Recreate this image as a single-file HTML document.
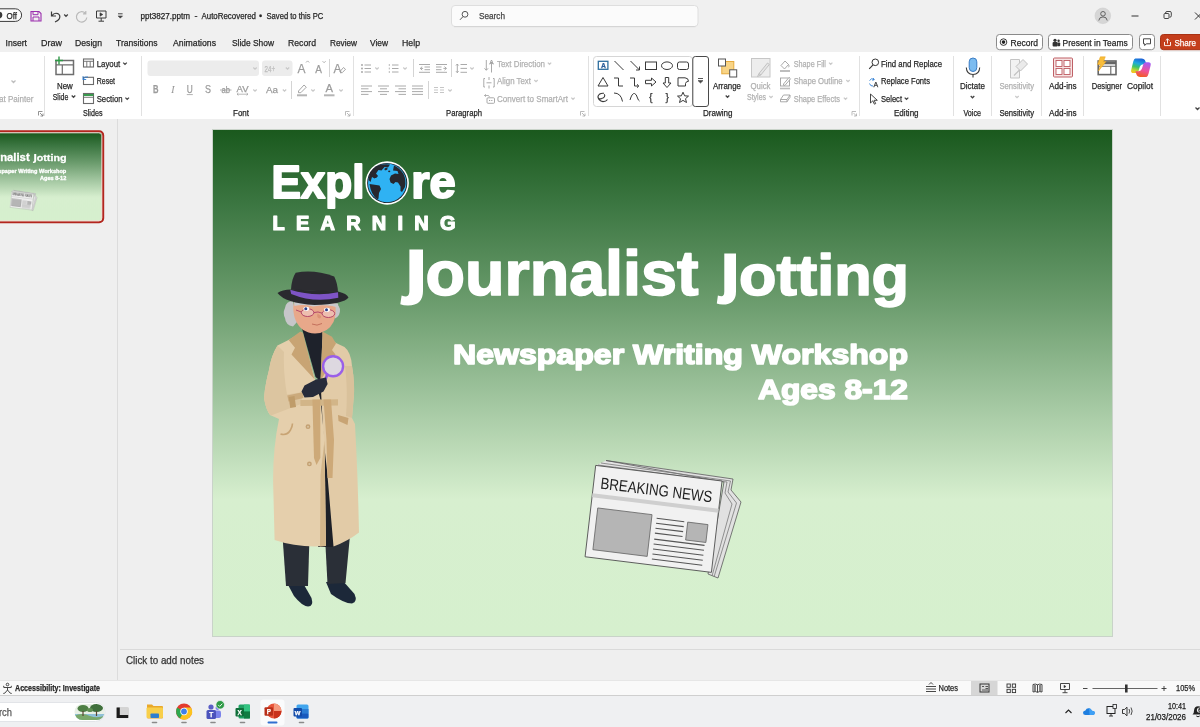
<!DOCTYPE html>
<html><head><meta charset="utf-8">
<style>
html,body{margin:0;padding:0}
body{width:1200px;height:727px;position:relative;overflow:hidden;background:#f0f0f0;font-family:"Liberation Sans",sans-serif;color:#262626}
.a{position:absolute}
svg{position:absolute;overflow:hidden}
</style></head><body>
<div class="a" style="left:0;top:0;width:1200px;height:52px;background:#f0f0f0"></div>
<div class="a" style="left:0;top:52px;width:1200px;height:67px;background:#fff"></div>
<div class="a" style="left:0;top:119px;width:1200px;height:561px;background:#efefef"></div>
<div class="a" style="left:0;top:680px;width:1200px;height:16px;background:#f9f9f9"></div>
<div class="a" style="left:0;top:696px;width:1200px;height:31px;background:#eff0f2"></div>
<!-- ===== SLIDE + ART (page coordinates) ===== -->
<svg id="art" class="a" style="left:0;top:0;will-change:transform" width="1200" height="727" viewBox="0 0 1200 727">
<defs>
<linearGradient id="bg" x1="0" y1="0" x2="0" y2="1">
<stop offset="0" stop-color="#1a591d"/>
<stop offset="0.14" stop-color="#3a7540"/>
<stop offset="0.34" stop-color="#6b9c6d"/>
<stop offset="0.54" stop-color="#a3c7a1"/>
<stop offset="0.73" stop-color="#d7efcf"/>
<stop offset="1" stop-color="#d6f0ce"/>
</linearGradient>
</defs>
<g id="slideart">
<rect x="213" y="130" width="899" height="506" fill="url(#bg)"/>
<!-- logo -->
<g fill="#fff" stroke="#fff" stroke-linejoin="round" font-family="Liberation Sans" font-weight="bold">
<text x="271.5" y="197.5" font-size="46" stroke-width="2" textLength="93" lengthAdjust="spacingAndGlyphs">Expl</text>
<text x="411.3" y="197.5" font-size="46" stroke-width="2" textLength="44.5" lengthAdjust="spacingAndGlyphs">re</text>
<text x="272.5" y="230" font-size="20" stroke-width="1.2" textLength="183" lengthAdjust="spacing">LEARNING</text>
</g>
<g id="globe">
<circle cx="387.2" cy="183" r="21.7" fill="#fff"/>
<circle cx="387.2" cy="183" r="20.1" fill="#1b2630"/>
<circle cx="387.2" cy="183" r="19.2" fill="#2fb2f3"/>
<path d="M368.6 180Q369 170 377 166Q383 163.5 390 164.5L388 167.5L384.5 167L381.5 170.5L378.5 170L376 173.5L378 176L374.5 178.5L372 177L370.5 182Z" fill="#27272f"/>
<ellipse cx="375.8" cy="176.6" rx="1.8" ry="1.2" fill="#27272f" transform="rotate(-30 375.8 176.6)"/>
<ellipse cx="386" cy="169" rx="1.7" ry="1.1" fill="#27272f" transform="rotate(-30 386 169)"/>
<ellipse cx="389.2" cy="171.3" rx="1.1" ry="0.9" fill="#27272f"/>
<path d="M369.5 184L373 184.5L379.5 185.5L381 189L379 193L378.5 198.5L377.5 199.5Q371 195 369.5 184Z" fill="#27272f"/>
<path d="M394 165.5Q400 168 403.5 174Q406.5 180 405 187L402 192L400.5 191L400.5 186.5L398 182.5L395.5 182L393.5 184L390.5 182.5L389.5 179L391 175.5L395 173.5L398.5 174L397.5 171L393 170.5Z" fill="#27272f"/>
</g>
<!-- title -->
<g fill="#fff" stroke="#fff" stroke-width="1.6" stroke-linejoin="round" font-family="Liberation Sans" font-weight="bold">
<text x="425.5" y="294.5" font-size="63" textLength="273" lengthAdjust="spacingAndGlyphs">ournalist</text>
<text x="739" y="294.5" font-size="57" textLength="170" lengthAdjust="spacingAndGlyphs">otting</text>
<text x="453" y="364" font-size="28" textLength="455" lengthAdjust="spacingAndGlyphs">Newspaper Writing Workshop</text>
<text x="758" y="399" font-size="28" textLength="150" lengthAdjust="spacingAndGlyphs">Ages 8-12</text>
</g>
<path d="M409.4 249.6H423V291Q423 305.5 408 305.5Q403.5 305.5 400.3 304.2L401.6 295.4Q404 296.4 406 296.4Q409.4 296.4 409.4 291Z" fill="#fff"/>
<path d="M724.3 253.5H736V291.5Q736 304.6 722.8 304.6Q719.3 304.6 716.8 303.5L717.9 295.4Q719.8 296.2 721.4 296.2Q724.3 296.2 724.3 291.5Z" fill="#fff"/>
<g id="lady">
<!-- shoes -->
<path d="M287 583L303 583L311.5 598Q314 606.5 308 606.5Q302 606 294 596Z" fill="#1c2839"/>
<path d="M326 582L343 581L354.5 594Q358 602 352 603.5Q344 603.5 331 594Z" fill="#1c2839"/>
<!-- trousers -->
<path d="M282.5 536L309.5 536L308 586L286 586Z" fill="#2a2f37"/>
<path d="M325 536L350.5 530L345.5 583L327.5 584Z" fill="#2a2f37"/>
<!-- dark inside of coat -->
<path d="M316 380L324 380L334 547L318 547Z" fill="#1d2027"/>
<!-- coat right panel -->
<path d="M322 332L336 343L344.5 347Q351 352 352 366Q354.5 380 354 394L352 418L355 424Q358 480 359 532.5Q348 541 333.5 546.5L327 470L323.5 440L320.5 380Z" fill="#e2cba7"/>
<!-- coat left panel -->
<path d="M302 332L288.5 340L277.5 345.5Q271 356 269 370Q265 385 264 398Q266 410 270 415L279 419Q272.5 450 273.2 485L274.6 540Q298 548 326 546L324.5 440L320.5 400L314.5 378Z" fill="#e5cfac"/>
<!-- inner facing -->
<path d="M320.5 475L324.5 440L326 546L320 546.4Z" fill="#d3b68a"/>
<!-- left arm (slightly darker) -->
<path d="M277.5 345.5Q271 356 269 370Q265 385 264 398Q266 411 271 415.5L301 404L303 392L287 394.5Q283 372 284 352Z" fill="#dcc5a0"/>
<path d="M352 366Q354.5 380 354 394L352 418L346 416Q348 390 345 366Z" fill="#d9c19b"/>
<!-- turtleneck -->
<path d="M302 328.5L322.5 328.5L322.5 336L320.5 381L315.5 377Z" fill="#1e222b"/>
<!-- lapels -->
<path d="M300.4 331.5L288.7 340L295 347.7L291.5 354.6L314.3 379L303 333Z" fill="#c8a474"/>
<path d="M322.4 331.5L332 336.7L336 343.6L332 350L335.5 354.6L320.5 381L322.5 336Z" fill="#c8a474"/>
<!-- cuff strap -->
<path d="M287.3 395.5L302.5 392.2L303.5 398L288.5 401.5Z" fill="#cbaa7c"/>
<path d="M288.7 397L294.5 396L296 407L290.2 408Z" fill="#bf9c6a"/>
<!-- belt -->
<path d="M300.4 400L338 399.3L338 405.5L300.4 406Z" fill="#d2b588"/>
<path d="M312.4 399.5L320.3 399.5L320.3 458L316.5 465L314 458Z" fill="#cda978"/>
<path d="M323.5 399.5L331 399.5L334 440L332.5 478L327.5 478L326.5 440Z" fill="#cda978"/>
<!-- pockets / buttons -->
<path d="M280.5 434Q287 436 290.5 430Q292.5 426 292.5 423.5" stroke="#c8a474" stroke-width="1.6" fill="none"/>
<path d="M338 415L348.5 418L347.5 425L338.5 421Z" fill="#c8a474"/>
<circle cx="308" cy="426.7" r="2.4" fill="#c4a173"/><circle cx="308" cy="426.7" r="1" fill="#d9c4a0"/>
<circle cx="309.4" cy="463.9" r="2.4" fill="#c4a173"/><circle cx="309.4" cy="463.9" r="1" fill="#d9c4a0"/>
<!-- magnifier -->
<path d="M327 375L325.3 380" stroke="#8d55e0" stroke-width="2.6" stroke-linecap="round"/>
<circle cx="333.1" cy="366.3" r="10" fill="#ddd8e0" stroke="#9a5fe8" stroke-width="2.4"/>
<!-- glove -->
<path d="M326 377.5L327.6 384L323.5 391.5L313 397L304.5 397.5L301.5 391.5L304.5 385.5L316 379.5Z" fill="#272b3a"/>
<!-- hair -->
<path d="M293 301Q286 301 285 308Q282.5 313 285 318Q285.5 325 293 326.5L297 322L294 306Z" fill="#c6c6c9"/>
<path d="M332 303Q338.5 303.5 340 309Q340.5 316 335 318.5L333 312Z" fill="#c6c6c9"/>
<!-- face -->
<path d="M294 302L335 303Q337 314 333.5 322Q328 333 315 333.5Q301 333 295.5 320Q292 311 294 302Z" fill="#e8a88a"/>
<path d="M294 301L338 303.5L338.5 308Q334 305.5 322 305.2L313 306.5Q303 304 294.5 306Z" fill="#c9c9cc"/>
<path d="M303.5 300.5Q308 299.5 313.5 301.5L313 304Q308 302.5 304 303.5Z" fill="#b4b4b7"/>
<!-- eyes / glasses -->
<ellipse cx="307.6" cy="312.6" rx="6.3" ry="3.9" fill="#f6d9dc" fill-opacity="0.45" stroke="#b5486a" stroke-width="1"/><ellipse cx="328.4" cy="313.6" rx="6.3" ry="3.9" fill="#f6d9dc" fill-opacity="0.45" stroke="#b5486a" stroke-width="1"/><path d="M313.9 312.6Q318 311 322.1 313.2M301.3 312L296 310" stroke="#b5486a" stroke-width="1" fill="none"/>
<path d="M317.5 313.5Q316.5 318 319.5 318.6Q321.5 318.3 321 316Z" fill="#dc9276"/>
<ellipse cx="306.3" cy="308.8" rx="3" ry="2.1" fill="#fff"/><ellipse cx="327" cy="309.8" rx="3" ry="2.1" fill="#fff"/>
<circle cx="305.8" cy="308.7" r="1.5" fill="#2a3f8a"/><circle cx="326.5" cy="309.7" r="1.5" fill="#2a3f8a"/>
<path d="M312 324Q317 326.5 322 323.5" stroke="#c4705c" stroke-width="1" fill="none"/>
<!-- hat -->
<path d="M295.7 272.7Q314 269 334.2 276.5Q337.5 283 338 292L291 289.7Q291.5 279 295.7 272.7Z" fill="#2c2c31"/>
<path d="M277.5 293Q282 289.5 291 289.5L338 291.5Q347 293.5 348.5 297.5Q344 304 314.5 305Q285 303 277.5 293Z" fill="#29292e"/>
<path d="M290.2 289.7Q314 297 338 292.3L338.3 297.8Q314 303.3 291.2 294Z" fill="#7e54c6"/>
</g>
<g id="paper">
<!-- back pages -->
<path d="M595.7 465.4L606 460.5L733 479L722 481.5Z" fill="#e4e4e4"/>
<path d="M606 460.5 L733 479 L731 490 L741 502 L718 578 L708 574 L724 482 Z" fill="#e1e1e1" stroke="#5a5a5a" stroke-width="0.8"/>
<path d="M601 463 L730.5 481 L728 492 L736.5 503 L714 577" fill="none" stroke="#7a7a7a" stroke-width="0.8"/>
<path d="M598 465 L727 482 L725 493 L732 504 L712 576" fill="none" stroke="#7a7a7a" stroke-width="0.8"/>
<g transform="matrix(0.987 0.122 -0.1156 0.993 595.7 465.4)">
<rect x="0" y="0" width="128" height="92" fill="#f1f1f1" stroke="#555" stroke-width="0.9"/>
<rect x="0" y="28" width="128" height="4" fill="#cfcfcf"/>
<text x="7" y="22.5" font-family="Liberation Sans" font-size="16" textLength="113" lengthAdjust="spacingAndGlyphs" fill="#222">BREAKING NEWS</text>
<rect x="7" y="42" width="55" height="42" fill="#b5b5b5" stroke="#666" stroke-width="0.8"/>
<rect x="98.5" y="45" width="20.5" height="18" fill="#b5b5b5" stroke="#666" stroke-width="0.8"/>
<g stroke="#555" stroke-width="1.1">
<path d="M67 45h28M67 50h28M67 55h28M67 60h28M67 66h51M67 71h51M67 76h51M67 81h51M67 86h51"/>
</g>
</g>
</g>
</g>
<rect x="212.5" y="129.5" width="900" height="507" fill="none" stroke="#c9d3c9" stroke-width="1"/>
</svg>

<svg id="ui" class="a" style="left:0;top:0;will-change:transform" width="1200" height="727" viewBox="0 0 1200 727" font-family="Liberation Sans, sans-serif">
<rect x="-12" y="8.8" width="33.6" height="12.6" rx="6.3" fill="#fdfdfd" stroke="#3a3a3a" stroke-width="1"/>
<circle cx="-1" cy="15.1" r="3.4" fill="#3a3a3a"/>
<text x="6.5" y="18.7" font-size="9.3" fill="#262626" stroke="#262626" stroke-width="0.25" textLength="10.5" lengthAdjust="spacingAndGlyphs">Off</text>
<path d="M31 11.5h8l2 2v7.5h-10z" fill="none" stroke="#9b2fae" stroke-width="1.1"/>
<path d="M33 11.5v3.2h5v-3.2M33 21v-4h6v4" fill="none" stroke="#9b2fae" stroke-width="1"/>
<path d="M51.5 11.5v4.5h4.5M51.8 15.8q2.5-3.5 6-2.2q3 1.8 1.6 5q-1.2 2-4.4 3.4" fill="none" stroke="#3a3a3a" stroke-width="1.2"/>
<path d="M64.2 14.5l1.8 1.8l1.8-1.8" fill="none" stroke="#444" stroke-width="1.25"/>
<path d="M85.3 13.2A5.2 5.2 0 1 0 86.8 17.5M85.8 11v2.8h-2.8" fill="none" stroke="#b9b9b9" stroke-width="1.2"/>
<path d="M96.5 11h9.5v7h-9.5zM101.2 18v3M98.5 21.2h5.5" fill="none" stroke="#3a3a3a" stroke-width="1"/>
<path d="M100 12.8v3.4l2.8-1.7z" fill="#3a3a3a" stroke="#3a3a3a" stroke-width="0.6"/>
<path d="M118 13.8h4.6" fill="none" stroke="#444" stroke-width="1"/>
<path d="M118 15.9h4.6l-2.3 2.3z" fill="#444" stroke="#444" stroke-width="0.5"/>
<text x="140.5" y="19.2" font-size="9" fill="#262626" stroke="#262626" stroke-width="0.25" textLength="49.5" lengthAdjust="spacingAndGlyphs">ppt3827.pptm</text>
<text x="194.5" y="19.2" font-size="9" fill="#262626" stroke="#262626" stroke-width="0.25">-</text>
<text x="201.5" y="19.2" font-size="9" fill="#262626" stroke="#262626" stroke-width="0.25" textLength="54.5" lengthAdjust="spacingAndGlyphs">AutoRecovered</text>
<text x="259" y="19.4" font-size="9" fill="#262626" stroke="#262626" stroke-width="0.25">•</text>
<text x="266.5" y="19.2" font-size="9" fill="#262626" stroke="#262626" stroke-width="0.25" textLength="56.8" lengthAdjust="spacingAndGlyphs">Saved to this PC</text>
<rect x="451.5" y="5.5" width="246.5" height="21" rx="3.5" fill="#fbfbfb" stroke="#dedede" stroke-width="1"/>
<path d="M454 26.7H695.5" fill="none" stroke="#cfcfcf" stroke-width="0.8"/>
<circle cx="465" cy="14.3" r="2.9" fill="none" stroke="#555" stroke-width="1"/>
<path d="M463 16.6l-3 3.2" fill="none" stroke="#555" stroke-width="1"/>
<text x="479" y="19.3" font-size="9" fill="#444" stroke="#444" stroke-width="0.25" textLength="26.0" lengthAdjust="spacingAndGlyphs">Search</text>
<circle cx="1102.8" cy="15.8" r="7.8" fill="#d6d6d6" stroke="#cdcdcd" stroke-width="0.6"/>
<circle cx="1103" cy="13.8" r="2.3" fill="none" stroke="#555" stroke-width="0.9"/>
<path d="M1098.8 20.5q0.3-3.6 4.2-3.6q3.9 0 4.2 3.6" fill="none" stroke="#555" stroke-width="0.9"/>
<path d="M1131.5 16h7" fill="none" stroke="#333" stroke-width="1"/>
<rect x="1164" y="13.5" width="5" height="5" rx="1" fill="none" stroke="#333" stroke-width="0.9"/>
<path d="M1165.5 13.2q0-1.7 1.5-1.7h3q1.3 0 1.3 1.3v3q0 1.4-1.6 1.5" fill="none" stroke="#333" stroke-width="0.9"/>
<path d="M1195 12.5l7 7M1202 12.5l-7 7" fill="none" stroke="#333" stroke-width="1"/>
<text x="5.5" y="45.5" font-size="9.3" fill="#262626" stroke="#262626" stroke-width="0.25" textLength="21.5" lengthAdjust="spacingAndGlyphs">Insert</text>
<text x="41" y="45.5" font-size="9.3" fill="#262626" stroke="#262626" stroke-width="0.25" textLength="21.0" lengthAdjust="spacingAndGlyphs">Draw</text>
<text x="75" y="45.5" font-size="9.3" fill="#262626" stroke="#262626" stroke-width="0.25" textLength="27.0" lengthAdjust="spacingAndGlyphs">Design</text>
<text x="116" y="45.5" font-size="9.3" fill="#262626" stroke="#262626" stroke-width="0.25" textLength="41.5" lengthAdjust="spacingAndGlyphs">Transitions</text>
<text x="173" y="45.5" font-size="9.3" fill="#262626" stroke="#262626" stroke-width="0.25" textLength="43.0" lengthAdjust="spacingAndGlyphs">Animations</text>
<text x="232" y="45.5" font-size="9.3" fill="#262626" stroke="#262626" stroke-width="0.25" textLength="42.0" lengthAdjust="spacingAndGlyphs">Slide Show</text>
<text x="288" y="45.5" font-size="9.3" fill="#262626" stroke="#262626" stroke-width="0.25" textLength="28.0" lengthAdjust="spacingAndGlyphs">Record</text>
<text x="330" y="45.5" font-size="9.3" fill="#262626" stroke="#262626" stroke-width="0.25" textLength="27.0" lengthAdjust="spacingAndGlyphs">Review</text>
<text x="370" y="45.5" font-size="9.3" fill="#262626" stroke="#262626" stroke-width="0.25" textLength="18.0" lengthAdjust="spacingAndGlyphs">View</text>
<text x="402" y="45.5" font-size="9.3" fill="#262626" stroke="#262626" stroke-width="0.25" textLength="18.0" lengthAdjust="spacingAndGlyphs">Help</text>
<rect x="996.5" y="34.5" width="46" height="15.2" rx="3" fill="#fff" stroke="#8a8a8a" stroke-width="1"/>
<circle cx="1003.5" cy="42.1" r="3.3" fill="none" stroke="#222" stroke-width="0.9"/><circle cx="1003.5" cy="42.1" r="1.8" fill="#222"/>
<text x="1010.5" y="45.6" font-size="9.3" fill="#262626" stroke="#262626" stroke-width="0.25" textLength="27.5" lengthAdjust="spacingAndGlyphs">Record</text>
<rect x="1048.5" y="34.5" width="84" height="15.2" rx="3" fill="#fff" stroke="#8a8a8a" stroke-width="1"/>
<circle cx="1055" cy="40.3" r="1.6" fill="#333"/><circle cx="1058.6" cy="40.8" r="1.2" fill="#333"/>
<rect x="1052.6" y="42" width="5" height="4.6" rx="1" fill="#333"/>
<rect x="1057.4" y="42.4" width="2.8" height="3.8" rx="0.8" fill="#333"/>
<text x="1062.5" y="45.6" font-size="9.3" fill="#262626" stroke="#262626" stroke-width="0.25" textLength="65.2" lengthAdjust="spacingAndGlyphs">Present in Teams</text>
<rect x="1139.5" y="34.5" width="15" height="15.2" rx="3" fill="#fff" stroke="#8a8a8a" stroke-width="1"/>
<path d="M1143.5 38.8h7v5h-4.2l-1.6 1.7v-1.7h-1.2z" fill="none" stroke="#333" stroke-width="0.9"/>
<rect x="1160.5" y="34.5" width="50" height="15.2" rx="3" fill="#c43e1c" stroke="#a83214" stroke-width="1"/>
<path d="M1164.5 42v3.6h6v-3.6M1167.5 43.6v-4.6M1165.7 40.6l1.8-1.8l1.8 1.8" fill="none" stroke="#fff" stroke-width="0.9"/>
<text x="1174.5" y="45.6" font-size="9.3" fill="#fff" stroke="#fff" stroke-width="0.25" textLength="21.5" lengthAdjust="spacingAndGlyphs">Share</text>
<text x="-1" y="101.7" font-size="9.3" fill="#b0b0b0" stroke="#b0b0b0" stroke-width="0.25" textLength="34.5" lengthAdjust="spacingAndGlyphs">at Painter</text>
<path d="M11.5 80.5l2 2l2-2" fill="none" stroke="#bdbdbd" stroke-width="1.25"/>
<path d="M38.5 115.5V111.5H42.5M40.0 113.0L43.0 116.0M43.0 113.5V116.0H40.5" fill="none" stroke="#777" stroke-width="0.8"/>
<path d="M44.5 56V116" stroke="#e1e1e1" stroke-width="1"/>
<rect x="56" y="60.5" width="17.5" height="14" rx="0" fill="none" stroke="#6e6e6e" stroke-width="1.5"/>
<path d="M56 64.8h17.5M62.3 64.8v9.7" fill="none" stroke="#6e6e6e" stroke-width="1.2"/>
<path d="M59 56.5v8M55 60.5h8" fill="none" stroke="#2e9a46" stroke-width="1.4"/>
<text x="57" y="88.7" font-size="9.3" fill="#262626" stroke="#262626" stroke-width="0.25" textLength="15.8" lengthAdjust="spacingAndGlyphs">New</text>
<text x="52.7" y="99.7" font-size="9.3" fill="#262626" stroke="#262626" stroke-width="0.25" textLength="15.6" lengthAdjust="spacingAndGlyphs">Slide</text>
<path d="M71.7 95.5l1.8 1.8l1.8-1.8" fill="none" stroke="#444" stroke-width="1.25"/>
<rect x="83.5" y="59" width="10" height="8" rx="0" fill="none" stroke="#6a6a6a" stroke-width="1.1"/>
<path d="M83.5 61.3h10M86.8 61.3v5.7M90.2 61.3v5.7" fill="none" stroke="#6a6a6a" stroke-width="0.9"/>
<text x="96.7" y="66.7" font-size="9.3" fill="#262626" stroke="#262626" stroke-width="0.25" textLength="23.6" lengthAdjust="spacingAndGlyphs">Layout</text>
<path d="M123.2 62.6l1.8 1.8l1.8-1.8" fill="none" stroke="#444" stroke-width="1.25"/>
<rect x="83.5" y="77.3" width="10" height="7.2" rx="0" fill="none" stroke="#6a6a6a" stroke-width="1.1"/>
<path d="M83 79.5q1.5-3.5 5-2.5M83 76.2v3.3h3.2" fill="none" stroke="#2b7cd3" stroke-width="0.9"/>
<text x="96.7" y="84.2" font-size="9.3" fill="#262626" stroke="#262626" stroke-width="0.25" textLength="18.3" lengthAdjust="spacingAndGlyphs">Reset</text>
<rect x="83.5" y="93.5" width="10" height="10" rx="0" fill="none" stroke="#6a6a6a" stroke-width="1.1"/>
<path d="M83.5 95h10" fill="none" stroke="#3a9a4e" stroke-width="2"/>
<path d="M83.5 97.3h10" fill="none" stroke="#6a6a6a" stroke-width="0.9"/>
<text x="96.7" y="101.7" font-size="9.3" fill="#262626" stroke="#262626" stroke-width="0.25" textLength="25.8" lengthAdjust="spacingAndGlyphs">Section</text>
<path d="M125.4 97.6l1.8 1.8l1.8-1.8" fill="none" stroke="#444" stroke-width="1.25"/>
<text x="83" y="115.7" font-size="8.9" fill="#262626" stroke="#262626" stroke-width="0.25" textLength="19.5" lengthAdjust="spacingAndGlyphs">Slides</text>
<path d="M141.5 56V116" stroke="#e1e1e1" stroke-width="1"/>
<rect x="147.5" y="60.5" width="111.5" height="15.5" rx="3" fill="#ececec"/>
<path d="M253.3 67.5l1.7 1.7l1.7-1.7" fill="none" stroke="#c9c9c9" stroke-width="1.25"/>
<rect x="262" y="60.5" width="30.5" height="15.5" rx="3" fill="#ececec"/>
<text x="264.5" y="71.5" font-size="8.5" fill="#bdbdbd" stroke="#bdbdbd" stroke-width="0.25" textLength="10.5" lengthAdjust="spacingAndGlyphs">24+</text>
<path d="M285.8 67.5l1.7 1.7l1.7-1.7" fill="none" stroke="#c9c9c9" stroke-width="1.25"/>
<text x="297.5" y="72.5" font-size="12" fill="#9c9c9c" stroke="#9c9c9c" stroke-width="0.25" textLength="8.0" lengthAdjust="spacingAndGlyphs">A</text>
<path d="M306 62.5l1.6-1.6l1.6 1.6" fill="none" stroke="#9c9c9c" stroke-width="0.8"/>
<text x="315.3" y="72.5" font-size="10.5" fill="#9c9c9c" stroke="#9c9c9c" stroke-width="0.25" textLength="6.7" lengthAdjust="spacingAndGlyphs">A</text>
<path d="M322.6 61.2l1.5 1.5l1.5-1.5" fill="none" stroke="#9c9c9c" stroke-width="0.8"/>
<path d="M329.5 59V77" stroke="#d4d4d4" stroke-width="1"/>
<text x="333.5" y="72.5" font-size="12" fill="#9c9c9c" stroke="#9c9c9c" stroke-width="0.25" textLength="8.0" lengthAdjust="spacingAndGlyphs">A</text>
<path d="M340 71.5l3.5-4l2 1.8l-3.3 3.4z" fill="none" stroke="#9c9c9c" stroke-width="0.9"/>
<text x="153" y="93.3" font-size="10.5" fill="#9c9c9c" stroke="#9c9c9c" stroke-width="0.25" textLength="5.5" lengthAdjust="spacingAndGlyphs" font-weight="bold">B</text>
<text x="171" y="93" font-size="11" fill="#9c9c9c" font-style="italic" font-family="Liberation Serif">I</text>
<text x="186.8" y="92.5" font-size="10" fill="#9c9c9c" stroke="#9c9c9c" stroke-width="0.25" textLength="6.0" lengthAdjust="spacingAndGlyphs">U</text>
<path d="M186.8 94.6h6" fill="none" stroke="#9c9c9c" stroke-width="0.8"/>
<text x="205" y="93.3" font-size="10.5" fill="#9c9c9c" stroke="#9c9c9c" stroke-width="0.25" textLength="6.0" lengthAdjust="spacingAndGlyphs">S</text>
<text x="221.5" y="93" font-size="8.5" fill="#9c9c9c" stroke="#9c9c9c" stroke-width="0.25" textLength="8.5" lengthAdjust="spacingAndGlyphs">ab</text>
<path d="M220 90h11.5" fill="none" stroke="#9c9c9c" stroke-width="0.8"/>
<text x="236.5" y="91.5" font-size="8.8" fill="#9c9c9c" stroke="#9c9c9c" stroke-width="0.25" textLength="12.0" lengthAdjust="spacingAndGlyphs">AV</text>
<path d="M237 94.2h11M238.4 93l-1.4 1.2l1.4 1.2M246.6 93l1.4 1.2l-1.4 1.2" fill="none" stroke="#9c9c9c" stroke-width="0.7"/>
<path d="M253.3 89.5l1.7 1.7l1.7-1.7" fill="none" stroke="#c9c9c9" stroke-width="1.25"/>
<text x="266" y="93" font-size="9.5" fill="#9c9c9c" stroke="#9c9c9c" stroke-width="0.25" textLength="12.0" lengthAdjust="spacingAndGlyphs">Aa</text>
<path d="M282.8 89.5l1.7 1.7l1.7-1.7" fill="none" stroke="#c9c9c9" stroke-width="1.25"/>
<path d="M291.5 81V99" stroke="#d4d4d4" stroke-width="1"/>
<path d="M298.5 91l5.5-6l2.3 2.2l-5.5 5.5h-2.3z" fill="none" stroke="#9c9c9c" stroke-width="0.9"/>
<path d="M297 95.3h10" fill="none" stroke="#b5b5b5" stroke-width="2"/>
<path d="M311.3 89.5l1.7 1.7l1.7-1.7" fill="none" stroke="#c9c9c9" stroke-width="1.25"/>
<text x="325.5" y="92" font-size="10.5" fill="#9c9c9c" stroke="#9c9c9c" stroke-width="0.25" textLength="7.5" lengthAdjust="spacingAndGlyphs">A</text>
<path d="M324 95.3h10.5" fill="none" stroke="#b5b5b5" stroke-width="2"/>
<path d="M339.3 89.5l1.7 1.7l1.7-1.7" fill="none" stroke="#c9c9c9" stroke-width="1.25"/>
<text x="233" y="115.7" font-size="8.9" fill="#262626" stroke="#262626" stroke-width="0.25" textLength="16.0" lengthAdjust="spacingAndGlyphs">Font</text>
<path d="M345.5 115.5V111.5H349.5M347.0 113.0L350.0 116.0M350.0 113.5V116.0H347.5" fill="none" stroke="#aaa" stroke-width="0.8"/>
<path d="M353.5 56V116" stroke="#e1e1e1" stroke-width="1"/>
<circle cx="362" cy="65" r="0.9" fill="#a0a0a0"/>
<path d="M364.5 65h6.5" fill="none" stroke="#a0a0a0" stroke-width="0.9"/>
<circle cx="362" cy="68.5" r="0.9" fill="#a0a0a0"/>
<path d="M364.5 68.5h6.5" fill="none" stroke="#a0a0a0" stroke-width="0.9"/>
<circle cx="362" cy="72" r="0.9" fill="#a0a0a0"/>
<path d="M364.5 72h6.5" fill="none" stroke="#a0a0a0" stroke-width="0.9"/>
<path d="M375.3 67.5l1.7 1.7l1.7-1.7" fill="none" stroke="#c9c9c9" stroke-width="1.25"/>
<path d="M389.3 64.1v1.8" fill="none" stroke="#a0a0a0" stroke-width="0.8"/>
<path d="M392 65h6.5" fill="none" stroke="#a0a0a0" stroke-width="0.9"/>
<path d="M389.3 67.6v1.8" fill="none" stroke="#a0a0a0" stroke-width="0.8"/>
<path d="M392 68.5h6.5" fill="none" stroke="#a0a0a0" stroke-width="0.9"/>
<path d="M389.3 71.1v1.8" fill="none" stroke="#a0a0a0" stroke-width="0.8"/>
<path d="M392 72h6.5" fill="none" stroke="#a0a0a0" stroke-width="0.9"/>
<path d="M403.3 67.5l1.7 1.7l1.7-1.7" fill="none" stroke="#c9c9c9" stroke-width="1.25"/>
<path d="M413.5 59V77" stroke="#d4d4d4" stroke-width="1"/>
<path d="M419 64.5h11M424.5 67h5.5M424.5 69.7h5.5M419 72.3h11M422.2 66.6l-1.9 1.8l1.9 1.8M420.3 68.4h2.8" fill="none" stroke="#a0a0a0" stroke-width="0.9"/>
<path d="M436 64.5h11M436 67h5.5M436 69.7h5.5M436 72.3h11M444.5 66.6l1.9 1.8l-1.9 1.8M446.4 68.4h-3" fill="none" stroke="#a0a0a0" stroke-width="0.9"/>
<path d="M451.5 59V77" stroke="#d4d4d4" stroke-width="1"/>
<path d="M460.5 64.5h6.5M460.5 68.4h6.5M460.5 72.3h6.5M457.3 64v8.7M456 65.5l1.3-1.5l1.3 1.5M456 71.2l1.3 1.5l1.3-1.5" fill="none" stroke="#a0a0a0" stroke-width="0.9"/>
<path d="M470.3 67.5l1.7 1.7l1.7-1.7" fill="none" stroke="#c9c9c9" stroke-width="1.25"/>
<path d="M361 86h11M361 88.8h7.5M361 91.6h11M361 94.4h7.5" fill="none" stroke="#a0a0a0" stroke-width="0.9"/>
<path d="M378 86h11M380 88.8h7M378 91.6h11M380 94.4h7" fill="none" stroke="#a0a0a0" stroke-width="0.9"/>
<path d="M395 86h11M398.5 88.8h7.5M395 91.6h11M398.5 94.4h7.5" fill="none" stroke="#a0a0a0" stroke-width="0.9"/>
<path d="M412 86h11M412 88.8h11M412 91.6h11M412 94.4h11" fill="none" stroke="#a0a0a0" stroke-width="0.9"/>
<path d="M428.5 81V99" stroke="#d4d4d4" stroke-width="1"/>
<path d="M434 87.5h4M434 90h4M434 92.5h4M440 87.5h4M440 90h4M440 92.5h4" fill="none" stroke="#c0c0c0" stroke-width="0.9"/>
<path d="M448.3 89.5l1.7 1.7l1.7-1.7" fill="none" stroke="#c9c9c9" stroke-width="1.25"/>
<path d="M486.3 60v10M484.5 68.3l1.8 2l1.8-2M491.5 72.5v-10M489.7 64.2l1.8-2l1.8 2" fill="none" stroke="#a0a0a0" stroke-width="0.9"/>
<text x="489.5" y="63.5" font-size="5" fill="#a0a0a0" stroke="#a0a0a0" stroke-width="0.25" textLength="4.0" lengthAdjust="spacingAndGlyphs">A</text>
<text x="497" y="66.7" font-size="9.3" fill="#b0b0b0" stroke="#b0b0b0" stroke-width="0.25" textLength="48.0" lengthAdjust="spacingAndGlyphs">Text Direction</text>
<path d="M547.8 62.6l1.7 1.7l1.7-1.7" fill="none" stroke="#c9c9c9" stroke-width="1.25"/>
<path d="M485 78.5h-1.2v8.5h1.2M493 78.5h1.2v8.5h-1.2M486.5 82.8h5M489 77v3M489 85.5v3" fill="none" stroke="#a0a0a0" stroke-width="0.9"/>
<text x="497" y="84.2" font-size="9.3" fill="#b0b0b0" stroke="#b0b0b0" stroke-width="0.25" textLength="34.0" lengthAdjust="spacingAndGlyphs">Align Text</text>
<path d="M534.3 80l1.7 1.7l1.7-1.7" fill="none" stroke="#c9c9c9" stroke-width="1.25"/>
<path d="M484.5 95.5h4l1 1.5M484.5 95.5l1.5-1.2M484.5 95.5l1.5 1.2" fill="none" stroke="#a0a0a0" stroke-width="0.8"/>
<rect x="487" y="97.8" width="7.5" height="5.5" rx="1" fill="none" stroke="#a0a0a0" stroke-width="0.9"/>
<path d="M489 100.5h1.2M491.2 100.5h1.2" fill="none" stroke="#a0a0a0" stroke-width="1.2"/>
<text x="497" y="101.7" font-size="9.3" fill="#b0b0b0" stroke="#b0b0b0" stroke-width="0.25" textLength="71.0" lengthAdjust="spacingAndGlyphs">Convert to SmartArt</text>
<path d="M571.3 97.6l1.7 1.7l1.7-1.7" fill="none" stroke="#c9c9c9" stroke-width="1.25"/>
<text x="446" y="115.7" font-size="8.9" fill="#262626" stroke="#262626" stroke-width="0.25" textLength="36.0" lengthAdjust="spacingAndGlyphs">Paragraph</text>
<path d="M580.5 115.5V111.5H584.5M582.0 113.0L585.0 116.0M585.0 113.5V116.0H582.5" fill="none" stroke="#aaa" stroke-width="0.8"/>
<path d="M588.5 56V116" stroke="#e1e1e1" stroke-width="1"/>
<rect x="593.5" y="56.5" width="99" height="50" rx="3" fill="#fff" stroke="#d6d6d6" stroke-width="1"/>
<rect x="598.3" y="61.3" width="9.6" height="8" rx="0" fill="none" stroke="#2f6f9f" stroke-width="1.3"/>
<text x="600.9" y="68" font-size="6.8" fill="#2b5f9a" stroke="#2b5f9a" stroke-width="0.25" font-weight="bold">A</text>
<path d="M614.5 61l9 9" fill="none" stroke="#3a3a3a" stroke-width="1"/>
<path d="M630.5 61l9 9M639.5 66.5v3.5h-3.5" fill="none" stroke="#3a3a3a" stroke-width="1"/>
<rect x="645.5" y="62" width="11" height="7.5" rx="0" fill="none" stroke="#3a3a3a" stroke-width="1"/>
<ellipse cx="667" cy="65.7" rx="5.5" ry="3.8" fill="none" stroke="#3a3a3a" stroke-width="1"/>
<rect x="677.5" y="62" width="11" height="7.5" rx="2" fill="none" stroke="#3a3a3a" stroke-width="1"/>
<path d="M603 77.5l5 8.5h-10z" fill="none" stroke="#3a3a3a" stroke-width="1"/>
<path d="M614 78h4.5v8h4.5" fill="none" stroke="#3a3a3a" stroke-width="1"/>
<path d="M630 78h4.5v8h4M637 84.3l1.8 1.7l-1.8 1.7" fill="none" stroke="#3a3a3a" stroke-width="1"/>
<path d="M645.5 80.3h6v-2.3l4.5 4l-4.5 4v-2.3h-6z" fill="none" stroke="#3a3a3a" stroke-width="1"/>
<path d="M665.3 77.5h3.4v5.5h2.3l-4 4.5l-4-4.5h2.3z" fill="none" stroke="#3a3a3a" stroke-width="1"/>
<path d="M678 77.8h7q3.5 0.3 3.5 3.5q-2.5 0-3 2.2v2.5h-7.5z" fill="none" stroke="#3a3a3a" stroke-width="1"/>
<path d="M604 93.3Q599.3 92.8 598 96.3Q597.6 99.6 601.5 98.6Q606 97 604.3 94.3M598 96.3Q598.3 101 603 101.6Q606 101.6 607.5 99.5" fill="none" stroke="#3a3a3a" stroke-width="1.1"/>
<path d="M614 93q7 0 8.5 8.5" fill="none" stroke="#3a3a3a" stroke-width="1"/>
<path d="M630 100q2-7 4.5-6.5q2 0.5 3 4.5q0.8 2.5 2 3" fill="none" stroke="#3a3a3a" stroke-width="1"/>
<text x="649" y="101" font-size="10.5" fill="#3a3a3a" stroke="#3a3a3a" stroke-width="0.25">{</text>
<text x="665.5" y="101" font-size="10.5" fill="#3a3a3a" stroke="#3a3a3a" stroke-width="0.25">}</text>
<path d="M683 92.2l1.6 3.6l3.9 0.3l-3 2.6l1 3.8l-3.5-2.1l-3.5 2.1l1-3.8l-3-2.6l3.9-0.3z" fill="none" stroke="#3a3a3a" stroke-width="1"/>
<rect x="692.8" y="56.5" width="15.7" height="50" rx="2.5" fill="#fff" stroke="#4a4a4a" stroke-width="1"/>
<path d="M698 78.5h5" fill="none" stroke="#444" stroke-width="0.9"/>
<path d="M698 80.6l2.5 2.4l2.5-2.4z" fill="#444" stroke="#444" stroke-width="0.6"/>
<rect x="721.8" y="61.5" width="12" height="12.3" rx="0" fill="#f8d486" stroke="#e6aa3c" stroke-width="1"/>
<rect x="718.5" y="59" width="7" height="7" rx="0" fill="#fff" stroke="#555" stroke-width="1"/>
<rect x="729.7" y="69.8" width="7" height="7.2" rx="0" fill="#fff" stroke="#555" stroke-width="1"/>
<text x="713" y="88.7" font-size="9.3" fill="#262626" stroke="#262626" stroke-width="0.25" textLength="28.0" lengthAdjust="spacingAndGlyphs">Arrange</text>
<path d="M725.7 95.5l1.8 1.8l1.8-1.8" fill="none" stroke="#444" stroke-width="1.25"/>
<rect x="751.5" y="58.5" width="18.5" height="18.5" rx="0" fill="#ededed" stroke="#c6c6c6" stroke-width="1"/>
<path d="M759 73.5l8.5-10.5l1.8 1.5l-8.5 10.5z" fill="#e6e6e6" stroke="#bdbdbd" stroke-width="0.9"/>
<path d="M757.5 76.5l1.5-3l1.8 1.5z" fill="none" stroke="#bdbdbd" stroke-width="0.9"/>
<text x="750.5" y="88.7" font-size="9.3" fill="#b0b0b0" stroke="#b0b0b0" stroke-width="0.25" textLength="20.0" lengthAdjust="spacingAndGlyphs">Quick</text>
<text x="747" y="100" font-size="9.3" fill="#b0b0b0" stroke="#b0b0b0" stroke-width="0.25" textLength="19.0" lengthAdjust="spacingAndGlyphs">Styles</text>
<path d="M769.3 96l1.7 1.7l1.7-1.7" fill="none" stroke="#c9c9c9" stroke-width="1.25"/>
<path d="M781 65.5l4-4.5l3.5 3.5l-4 4.5zM788.5 64.5q1.3 1.8 0 2.8" fill="none" stroke="#a0a0a0" stroke-width="0.9"/>
<path d="M780 71h10" fill="none" stroke="#bdbdbd" stroke-width="2"/>
<text x="793.7" y="67" font-size="9.3" fill="#b0b0b0" stroke="#b0b0b0" stroke-width="0.25" textLength="32.3" lengthAdjust="spacingAndGlyphs">Shape Fill</text>
<path d="M829.0 62.6l1.7 1.7l1.7-1.7" fill="none" stroke="#c9c9c9" stroke-width="1.25"/>
<rect x="780.5" y="78" width="9" height="8" rx="0" fill="none" stroke="#a0a0a0" stroke-width="0.9"/>
<path d="M783.5 84l5.5-6.5l1.5 1.3l-5.5 6.5h-1.5z" fill="#fff" stroke="#a0a0a0" stroke-width="0.9"/>
<path d="M780 88.5h10" fill="none" stroke="#bdbdbd" stroke-width="1.6"/>
<text x="793.7" y="84.1" font-size="9.3" fill="#b0b0b0" stroke="#b0b0b0" stroke-width="0.25" textLength="48.8" lengthAdjust="spacingAndGlyphs">Shape Outline</text>
<path d="M846.3 80l1.7 1.7l1.7-1.7" fill="none" stroke="#c9c9c9" stroke-width="1.25"/>
<path d="M780.5 99.5l3-4.5h6.5l-3 4.5zM780.5 99.5v2.3h6.5v-2.3M787 101.8l3-4.5V95" fill="none" stroke="#a0a0a0" stroke-width="0.9"/>
<text x="793.7" y="102" font-size="9.3" fill="#b0b0b0" stroke="#b0b0b0" stroke-width="0.25" textLength="46.3" lengthAdjust="spacingAndGlyphs">Shape Effects</text>
<path d="M843.8 97.6l1.7 1.7l1.7-1.7" fill="none" stroke="#c9c9c9" stroke-width="1.25"/>
<text x="703" y="115.7" font-size="8.9" fill="#262626" stroke="#262626" stroke-width="0.25" textLength="29.5" lengthAdjust="spacingAndGlyphs">Drawing</text>
<path d="M852 115.5V111.5H856M853.5 113.0L856.5 116.0M856.5 113.5V116.0H854" fill="none" stroke="#aaa" stroke-width="0.8"/>
<path d="M859.5 56V116" stroke="#e1e1e1" stroke-width="1"/>
<circle cx="875.3" cy="62.3" r="3.3" fill="none" stroke="#333" stroke-width="1"/>
<path d="M873 64.8l-3.8 4" fill="none" stroke="#333" stroke-width="1.1"/>
<text x="881" y="67" font-size="9.3" fill="#262626" stroke="#262626" stroke-width="0.25" textLength="61.0" lengthAdjust="spacingAndGlyphs">Find and Replace</text>
<text x="873.5" y="87" font-size="7" fill="#333" stroke="#333" stroke-width="0.25">A</text>
<path d="M869.5 80.5q2-3 4.5-1M873 78l1.3 1.7l-2 0.6M869.5 83.5q1 3 3.5 2.5" fill="none" stroke="#2b7cd3" stroke-width="0.9"/>
<text x="881" y="84.2" font-size="9.3" fill="#262626" stroke="#262626" stroke-width="0.25" textLength="49.0" lengthAdjust="spacingAndGlyphs">Replace Fonts</text>
<path d="M870.5 94v9l2.3-2.2l1.6 3.4l1.3-0.6l-1.6-3.3h3.2z" fill="none" stroke="#333" stroke-width="0.9"/>
<text x="881" y="102" font-size="9.3" fill="#262626" stroke="#262626" stroke-width="0.25" textLength="21.0" lengthAdjust="spacingAndGlyphs">Select</text>
<path d="M904.7 97.6l1.8 1.8l1.8-1.8" fill="none" stroke="#444" stroke-width="1.25"/>
<text x="894" y="115.7" font-size="8.9" fill="#262626" stroke="#262626" stroke-width="0.25" textLength="24.6" lengthAdjust="spacingAndGlyphs">Editing</text>
<path d="M953.5 56V116" stroke="#e1e1e1" stroke-width="1"/>
<rect x="969.2" y="58" width="7.6" height="13.5" rx="3.8" fill="#7cbcf0" stroke="#3a7cc4" stroke-width="1"/>
<path d="M966.3 67.5q0.3 6.8 6.7 7q6.4-0.2 6.7-7M973 74.5v3" fill="none" stroke="#3c3c3c" stroke-width="1.1"/>
<text x="960" y="89.1" font-size="9.3" fill="#262626" stroke="#262626" stroke-width="0.25" textLength="25.0" lengthAdjust="spacingAndGlyphs">Dictate</text>
<path d="M970.7 96l1.8 1.8l1.8-1.8" fill="none" stroke="#444" stroke-width="1.25"/>
<text x="963.4" y="115.7" font-size="8.9" fill="#262626" stroke="#262626" stroke-width="0.25" textLength="17.6" lengthAdjust="spacingAndGlyphs">Voice</text>
<path d="M991.5 56V116" stroke="#e1e1e1" stroke-width="1"/>
<path d="M1010.5 59.5h9l-0 0v18.5h-9z" fill="#f2f2f2" stroke="#c4c4c4" stroke-width="1"/>
<path d="M1016 66.5l7-7l4.5 4.5l-7 7z" fill="#eaeaea" stroke="#c0c0c0" stroke-width="1"/>
<path d="M1019.5 70l-5.5 5.5" fill="none" stroke="#c0c0c0" stroke-width="1.2"/>
<text x="999.4" y="89.1" font-size="9.3" fill="#b0b0b0" stroke="#b0b0b0" stroke-width="0.25" textLength="34.6" lengthAdjust="spacingAndGlyphs">Sensitivity</text>
<path d="M1015.3 96l1.7 1.7l1.7-1.7" fill="none" stroke="#c9c9c9" stroke-width="1.25"/>
<text x="999.4" y="115.7" font-size="8.9" fill="#262626" stroke="#262626" stroke-width="0.25" textLength="34.6" lengthAdjust="spacingAndGlyphs">Sensitivity</text>
<path d="M1041.5 56V116" stroke="#e1e1e1" stroke-width="1"/>
<rect x="1053.5" y="58" width="19" height="19" rx="1" fill="#f6e3e3" stroke="#bf6066" stroke-width="1"/>
<rect x="1056" y="60.5" width="6" height="6" rx="0" fill="#fff" stroke="#bd5a61" stroke-width="0.9"/>
<rect x="1056" y="68.5" width="6" height="6" rx="0" fill="#fff" stroke="#bd5a61" stroke-width="0.9"/>
<rect x="1064" y="60.5" width="6" height="6" rx="0" fill="#fff" stroke="#bd5a61" stroke-width="0.9"/>
<rect x="1064" y="68.5" width="6" height="6" rx="0" fill="#fff" stroke="#bd5a61" stroke-width="0.9"/>
<text x="1049" y="89.1" font-size="9.3" fill="#262626" stroke="#262626" stroke-width="0.25" textLength="27.7" lengthAdjust="spacingAndGlyphs">Add-ins</text>
<text x="1049" y="115.7" font-size="8.9" fill="#262626" stroke="#262626" stroke-width="0.25" textLength="27.7" lengthAdjust="spacingAndGlyphs">Add-ins</text>
<path d="M1083.5 56V116" stroke="#e1e1e1" stroke-width="1"/>
<rect x="1098.2" y="61" width="17.8" height="13.6" rx="0" fill="#fff" stroke="#666" stroke-width="1.6"/>
<path d="M1098.2 63h17.8" fill="none" stroke="#666" stroke-width="2.6"/>
<path d="M1098.2 66.3h17.8M1110.8 66.3v8.3" fill="none" stroke="#666" stroke-width="1.1"/>
<path d="M1100.3 56.8h5l-1.8 4.7h2.6l-7.6 9.5l2-6.4h-3z" fill="#f8bd3a" stroke="#e9a21f" stroke-width="0.5"/>
<text x="1091.7" y="89.1" font-size="9.3" fill="#262626" stroke="#262626" stroke-width="0.25" textLength="30.3" lengthAdjust="spacingAndGlyphs">Designer</text>
<defs><linearGradient id="cp1" x1="0.6" y1="0" x2="0.3" y2="1"><stop offset="0" stop-color="#1b5fd6"/><stop offset="0.35" stop-color="#1fa8e0"/><stop offset="0.6" stop-color="#3cc46a"/><stop offset="0.85" stop-color="#c9d62e"/><stop offset="1" stop-color="#f5c321"/></linearGradient>
<linearGradient id="cp2" x1="0.6" y1="0" x2="0.3" y2="1"><stop offset="0" stop-color="#f25c22"/><stop offset="0.45" stop-color="#f0529a"/><stop offset="1" stop-color="#a45cf5"/></linearGradient></defs>
<path d="M1135.3 58.4h6.2q3 0 3.9 2.8l1 3h-3.2q-2.6 0-3.4 2.6l-1.4 4.6q-0.6 1.7-2.6 1.7h-2.2q-3.2 0-2.4-3.1l2-8.2q0.9-3.4 2.1-3.4z" fill="url(#cp1)" stroke="none" stroke-width="0"/>
<path d="M1135.3 58.4h6.2q3 0 3.9 2.8l1 3h-3.2q-2.6 0-3.4 2.6l-1.4 4.6q-0.6 1.7-2.6 1.7h-2.2q-3.2 0-2.4-3.1l2-8.2q0.9-3.4 2.1-3.4z" fill="url(#cp2)" stroke="none" stroke-width="0" transform="rotate(180 1140.9 67.7)"/>
<text x="1127" y="89.1" font-size="9.3" fill="#262626" stroke="#262626" stroke-width="0.25" textLength="26.0" lengthAdjust="spacingAndGlyphs">Copilot</text>
<path d="M1160.5 56V116" stroke="#e1e1e1" stroke-width="1"/>
<path d="M1195.5 107.5l2 2l2-2" fill="none" stroke="#444" stroke-width="1.25"/>
<path d="M117.5 119V680" fill="none" stroke="#dcdcdc" stroke-width="1"/>
<defs><clipPath id="tc"><rect x="-10" y="132.5" width="112" height="88.5" rx="3"/></clipPath></defs>
<g clip-path="url(#tc)"><g transform="translate(-92.490 109.763) scale(0.17490)"><g>
<rect x="213" y="130" width="899" height="506" fill="url(#bg)"/>
<!-- logo -->
<g fill="#fff" stroke="#fff" stroke-linejoin="round" font-family="Liberation Sans" font-weight="bold">
<text x="271.5" y="197.5" font-size="46" stroke-width="2" textLength="93" lengthAdjust="spacingAndGlyphs">Expl</text>
<text x="411.3" y="197.5" font-size="46" stroke-width="2" textLength="44.5" lengthAdjust="spacingAndGlyphs">re</text>
<text x="272.5" y="230" font-size="20" stroke-width="1.2" textLength="183" lengthAdjust="spacing">LEARNING</text>
</g>
<g>
<circle cx="387.2" cy="183" r="21.7" fill="#fff"/>
<circle cx="387.2" cy="183" r="20.1" fill="#1b2630"/>
<circle cx="387.2" cy="183" r="19.2" fill="#2fb2f3"/>
<path d="M368.6 180Q369 170 377 166Q383 163.5 390 164.5L388 167.5L384.5 167L381.5 170.5L378.5 170L376 173.5L378 176L374.5 178.5L372 177L370.5 182Z" fill="#27272f"/>
<ellipse cx="375.8" cy="176.6" rx="1.8" ry="1.2" fill="#27272f" transform="rotate(-30 375.8 176.6)"/>
<ellipse cx="386" cy="169" rx="1.7" ry="1.1" fill="#27272f" transform="rotate(-30 386 169)"/>
<ellipse cx="389.2" cy="171.3" rx="1.1" ry="0.9" fill="#27272f"/>
<path d="M369.5 184L373 184.5L379.5 185.5L381 189L379 193L378.5 198.5L377.5 199.5Q371 195 369.5 184Z" fill="#27272f"/>
<path d="M394 165.5Q400 168 403.5 174Q406.5 180 405 187L402 192L400.5 191L400.5 186.5L398 182.5L395.5 182L393.5 184L390.5 182.5L389.5 179L391 175.5L395 173.5L398.5 174L397.5 171L393 170.5Z" fill="#27272f"/>
</g>
<!-- title -->
<g fill="#fff" stroke="#fff" stroke-width="1.6" stroke-linejoin="round" font-family="Liberation Sans" font-weight="bold">
<text x="425.5" y="294.5" font-size="63" textLength="273" lengthAdjust="spacingAndGlyphs">ournalist</text>
<text x="739" y="294.5" font-size="57" textLength="170" lengthAdjust="spacingAndGlyphs">otting</text>
<text x="453" y="364" font-size="28" textLength="455" lengthAdjust="spacingAndGlyphs">Newspaper Writing Workshop</text>
<text x="758" y="399" font-size="28" textLength="150" lengthAdjust="spacingAndGlyphs">Ages 8-12</text>
</g>
<path d="M409.4 249.6H423V291Q423 305.5 408 305.5Q403.5 305.5 400.3 304.2L401.6 295.4Q404 296.4 406 296.4Q409.4 296.4 409.4 291Z" fill="#fff"/>
<path d="M724.3 253.5H736V291.5Q736 304.6 722.8 304.6Q719.3 304.6 716.8 303.5L717.9 295.4Q719.8 296.2 721.4 296.2Q724.3 296.2 724.3 291.5Z" fill="#fff"/>
<g>
<!-- shoes -->
<path d="M287 583L303 583L311.5 598Q314 606.5 308 606.5Q302 606 294 596Z" fill="#1c2839"/>
<path d="M326 582L343 581L354.5 594Q358 602 352 603.5Q344 603.5 331 594Z" fill="#1c2839"/>
<!-- trousers -->
<path d="M282.5 536L309.5 536L308 586L286 586Z" fill="#2a2f37"/>
<path d="M325 536L350.5 530L345.5 583L327.5 584Z" fill="#2a2f37"/>
<!-- dark inside of coat -->
<path d="M316 380L324 380L334 547L318 547Z" fill="#1d2027"/>
<!-- coat right panel -->
<path d="M322 332L336 343L344.5 347Q351 352 352 366Q354.5 380 354 394L352 418L355 424Q358 480 359 532.5Q348 541 333.5 546.5L327 470L323.5 440L320.5 380Z" fill="#e2cba7"/>
<!-- coat left panel -->
<path d="M302 332L288.5 340L277.5 345.5Q271 356 269 370Q265 385 264 398Q266 410 270 415L279 419Q272.5 450 273.2 485L274.6 540Q298 548 326 546L324.5 440L320.5 400L314.5 378Z" fill="#e5cfac"/>
<!-- inner facing -->
<path d="M320.5 475L324.5 440L326 546L320 546.4Z" fill="#d3b68a"/>
<!-- left arm (slightly darker) -->
<path d="M277.5 345.5Q271 356 269 370Q265 385 264 398Q266 411 271 415.5L301 404L303 392L287 394.5Q283 372 284 352Z" fill="#dcc5a0"/>
<path d="M352 366Q354.5 380 354 394L352 418L346 416Q348 390 345 366Z" fill="#d9c19b"/>
<!-- turtleneck -->
<path d="M302 328.5L322.5 328.5L322.5 336L320.5 381L315.5 377Z" fill="#1e222b"/>
<!-- lapels -->
<path d="M300.4 331.5L288.7 340L295 347.7L291.5 354.6L314.3 379L303 333Z" fill="#c8a474"/>
<path d="M322.4 331.5L332 336.7L336 343.6L332 350L335.5 354.6L320.5 381L322.5 336Z" fill="#c8a474"/>
<!-- cuff strap -->
<path d="M287.3 395.5L302.5 392.2L303.5 398L288.5 401.5Z" fill="#cbaa7c"/>
<path d="M288.7 397L294.5 396L296 407L290.2 408Z" fill="#bf9c6a"/>
<!-- belt -->
<path d="M300.4 400L338 399.3L338 405.5L300.4 406Z" fill="#d2b588"/>
<path d="M312.4 399.5L320.3 399.5L320.3 458L316.5 465L314 458Z" fill="#cda978"/>
<path d="M323.5 399.5L331 399.5L334 440L332.5 478L327.5 478L326.5 440Z" fill="#cda978"/>
<!-- pockets / buttons -->
<path d="M280.5 434Q287 436 290.5 430Q292.5 426 292.5 423.5" stroke="#c8a474" stroke-width="1.6" fill="none"/>
<path d="M338 415L348.5 418L347.5 425L338.5 421Z" fill="#c8a474"/>
<circle cx="308" cy="426.7" r="2.4" fill="#c4a173"/><circle cx="308" cy="426.7" r="1" fill="#d9c4a0"/>
<circle cx="309.4" cy="463.9" r="2.4" fill="#c4a173"/><circle cx="309.4" cy="463.9" r="1" fill="#d9c4a0"/>
<!-- magnifier -->
<path d="M327 375L325.3 380" stroke="#8d55e0" stroke-width="2.6" stroke-linecap="round"/>
<circle cx="333.1" cy="366.3" r="10" fill="#ddd8e0" stroke="#9a5fe8" stroke-width="2.4"/>
<!-- glove -->
<path d="M326 377.5L327.6 384L323.5 391.5L313 397L304.5 397.5L301.5 391.5L304.5 385.5L316 379.5Z" fill="#272b3a"/>
<!-- hair -->
<path d="M293 301Q286 301 285 308Q282.5 313 285 318Q285.5 325 293 326.5L297 322L294 306Z" fill="#c6c6c9"/>
<path d="M332 303Q338.5 303.5 340 309Q340.5 316 335 318.5L333 312Z" fill="#c6c6c9"/>
<!-- face -->
<path d="M294 302L335 303Q337 314 333.5 322Q328 333 315 333.5Q301 333 295.5 320Q292 311 294 302Z" fill="#e8a88a"/>
<path d="M294 301L338 303.5L338.5 308Q334 305.5 322 305.2L313 306.5Q303 304 294.5 306Z" fill="#c9c9cc"/>
<path d="M303.5 300.5Q308 299.5 313.5 301.5L313 304Q308 302.5 304 303.5Z" fill="#b4b4b7"/>
<!-- eyes / glasses -->
<ellipse cx="307.6" cy="312.6" rx="6.3" ry="3.9" fill="#f6d9dc" fill-opacity="0.45" stroke="#b5486a" stroke-width="1"/><ellipse cx="328.4" cy="313.6" rx="6.3" ry="3.9" fill="#f6d9dc" fill-opacity="0.45" stroke="#b5486a" stroke-width="1"/><path d="M313.9 312.6Q318 311 322.1 313.2M301.3 312L296 310" stroke="#b5486a" stroke-width="1" fill="none"/>
<path d="M317.5 313.5Q316.5 318 319.5 318.6Q321.5 318.3 321 316Z" fill="#dc9276"/>
<ellipse cx="306.3" cy="308.8" rx="3" ry="2.1" fill="#fff"/><ellipse cx="327" cy="309.8" rx="3" ry="2.1" fill="#fff"/>
<circle cx="305.8" cy="308.7" r="1.5" fill="#2a3f8a"/><circle cx="326.5" cy="309.7" r="1.5" fill="#2a3f8a"/>
<path d="M312 324Q317 326.5 322 323.5" stroke="#c4705c" stroke-width="1" fill="none"/>
<!-- hat -->
<path d="M295.7 272.7Q314 269 334.2 276.5Q337.5 283 338 292L291 289.7Q291.5 279 295.7 272.7Z" fill="#2c2c31"/>
<path d="M277.5 293Q282 289.5 291 289.5L338 291.5Q347 293.5 348.5 297.5Q344 304 314.5 305Q285 303 277.5 293Z" fill="#29292e"/>
<path d="M290.2 289.7Q314 297 338 292.3L338.3 297.8Q314 303.3 291.2 294Z" fill="#7e54c6"/>
</g>
<g>
<!-- back pages -->
<path d="M595.7 465.4L606 460.5L733 479L722 481.5Z" fill="#e4e4e4"/>
<path d="M606 460.5 L733 479 L731 490 L741 502 L718 578 L708 574 L724 482 Z" fill="#e1e1e1" stroke="#5a5a5a" stroke-width="0.8"/>
<path d="M601 463 L730.5 481 L728 492 L736.5 503 L714 577" fill="none" stroke="#7a7a7a" stroke-width="0.8"/>
<path d="M598 465 L727 482 L725 493 L732 504 L712 576" fill="none" stroke="#7a7a7a" stroke-width="0.8"/>
<g transform="matrix(0.987 0.122 -0.1156 0.993 595.7 465.4)">
<rect x="0" y="0" width="128" height="92" fill="#f1f1f1" stroke="#555" stroke-width="0.9"/>
<rect x="0" y="28" width="128" height="4" fill="#cfcfcf"/>
<text x="7" y="22.5" font-family="Liberation Sans" font-size="16" textLength="113" lengthAdjust="spacingAndGlyphs" fill="#222">BREAKING NEWS</text>
<rect x="7" y="42" width="55" height="42" fill="#b5b5b5" stroke="#666" stroke-width="0.8"/>
<rect x="98.5" y="45" width="20.5" height="18" fill="#b5b5b5" stroke="#666" stroke-width="0.8"/>
<g stroke="#555" stroke-width="1.1">
<path d="M67 45h28M67 50h28M67 55h28M67 60h28M67 66h51M67 71h51M67 76h51M67 81h51M67 86h51"/>
</g>
</g>
</g>
</g>
</g></g>
<rect x="-10" y="131.3" width="113.2" height="91" rx="4" fill="none" stroke="#b3261e" stroke-width="2"/>
<rect x="-10" y="132.8" width="111.7" height="88" rx="3" fill="none" stroke="#f3d9cf" stroke-width="0.8"/>
<path d="M120 649.5H1200" fill="none" stroke="#dadada" stroke-width="1"/>
<text x="126" y="663.5" font-size="10.8" fill="#333" stroke="#333" stroke-width="0.25" textLength="78.0" lengthAdjust="spacingAndGlyphs">Click to add notes</text>
<path d="M0 680.5H1200" fill="none" stroke="#e6e6e6" stroke-width="1"/>
<circle cx="7.5" cy="684.5" r="1.3" fill="none" stroke="#333" stroke-width="0.9"/>
<path d="M3.5 687.5h8M7.5 687.5v2.5M7.5 690l-3 3.5M7.5 690l3 3.5M3 686l1.5 1M12 686l-1.5 1M3.3 693.5l1.2-0.5M11.7 693.5l-1.2-0.5" fill="none" stroke="#333" stroke-width="0.9"/>
<text x="15" y="690.8" font-size="8.6" fill="#262626" stroke="#262626" stroke-width="0.25" textLength="85.0" lengthAdjust="spacingAndGlyphs" font-weight="bold">Accessibility: Investigate</text>
<path d="M926 691.5h10M926 689h10M926 686.5h10M929 684.5l2-2l2 2" fill="none" stroke="#333" stroke-width="0.9"/>
<text x="938.5" y="691.3" font-size="8.6" fill="#262626" stroke="#262626" stroke-width="0.25" textLength="19.5" lengthAdjust="spacingAndGlyphs">Notes</text>
<rect x="971" y="681" width="26.5" height="14.5" rx="0" fill="#d6d6d6"/>
<rect x="980" y="684" width="9" height="8" rx="0" fill="none" stroke="#333" stroke-width="1"/>
<path d="M982 686.5h2M985.5 686.5h2.5M985.5 688.5h2.5M982 690h6" fill="none" stroke="#333" stroke-width="0.8"/>
<rect x="1007" y="684" width="3.3" height="3.3" rx="0" fill="none" stroke="#333" stroke-width="0.9"/>
<rect x="1012.3" y="684" width="3.3" height="3.3" rx="0" fill="none" stroke="#333" stroke-width="0.9"/>
<rect x="1007" y="689.3" width="3.3" height="3.3" rx="0" fill="none" stroke="#333" stroke-width="0.9"/>
<rect x="1012.3" y="689.3" width="3.3" height="3.3" rx="0" fill="none" stroke="#333" stroke-width="0.9"/>
<path d="M1033 684.5q2.5-1 4.5 0.3q2-1.3 4.5-0.3v7.5q-2.5-1-4.5 0.3q-2-1.3-4.5-0.3zM1037.5 684.8v7.5" fill="none" stroke="#333" stroke-width="0.9"/>
<path d="M1035 685v6.5M1040 685v6.5" fill="none" stroke="#555" stroke-width="1.4"/>
<path d="M1060.5 683.5h9v6h-9zM1065 689.5v3M1062.5 692.7h5" fill="none" stroke="#333" stroke-width="0.9"/>
<path d="M1064 685.2v2.6l2-1.3z" fill="#333" stroke="#333" stroke-width="0.5"/>
<path d="M1083 688.5h4.5" fill="none" stroke="#333" stroke-width="0.9"/>
<path d="M1092.5 688.5h65" fill="none" stroke="#555" stroke-width="0.9"/>
<rect x="1125" y="684.5" width="2.6" height="8" rx="0" fill="#333"/>
<path d="M1161.5 688.5h5M1164 686v5" fill="none" stroke="#333" stroke-width="0.9"/>
<text x="1176" y="691.3" font-size="8.6" fill="#262626" stroke="#262626" stroke-width="0.25" textLength="19.0" lengthAdjust="spacingAndGlyphs">105%</text>
<path d="M0 695.5H1200" fill="none" stroke="#cfcfcf" stroke-width="1"/>
<rect x="-20" y="702.5" width="125" height="19" rx="9.5" fill="#fff" stroke="#e2e4e8" stroke-width="1"/>
<text x="-1" y="716" font-size="10.5" fill="#555" stroke="#555" stroke-width="0.25" textLength="13.0" lengthAdjust="spacingAndGlyphs">rch</text>
<defs><clipPath id="sh"><rect x="74.5" y="704" width="30" height="16" rx="8"/></clipPath></defs>
<g clip-path="url(#sh)"><rect x="74" y="703" width="32" height="18" fill="#e8f0e6"/><rect x="74" y="714" width="32" height="7" fill="#8fc0d8"/><path d="M74 716q8-4 16 0q8 3 16-1v6h-32z" fill="#7aa86a"/><ellipse cx="83" cy="708.5" rx="5.5" ry="3.5" fill="#4e7f45"/><ellipse cx="96.5" cy="708" rx="6.5" ry="4" fill="#3f6f3c"/><ellipse cx="90" cy="710" rx="3" ry="2" fill="#5f8f52"/><path d="M83 711v5M96.5 711v5" stroke="#5a4632" stroke-width="1.2"/></g>
<rect x="116.5" y="707" width="12.5" height="11.3" rx="1.5" fill="#d4d4d4"/>
<path d="M118.2 707.5v9h10" fill="none" stroke="#1b1b1b" stroke-width="3.2" stroke-linejoin="miter"/>
<path d="M147 704.5h5l1.5 1.5h8.5q1 0 1 1v10.5q0 1-1 1h-14q-1 0-1-1z" fill="#e9a82a" stroke="none" stroke-width="0"/>
<rect x="146.5" y="707.5" width="16.5" height="10.5" rx="1" fill="#f8cf4a"/>
<rect x="150.5" y="713.5" width="8.5" height="4.5" rx="0.8" fill="#2f7fd0"/>
<path d="M152.5 722.5h4" fill="none" stroke="#8a8a8a" stroke-width="1.6" stroke-linecap="round"/>
<circle cx="184" cy="711.5" r="8" fill="#e33b2e"/>
<path d="M184 711.5L177.1 707.5A8 8 0 0 0 180 718.4z" fill="#2da94f" stroke="none" stroke-width="0"/>
<path d="M184 711.5L180 718.4A8 8 0 0 0 191 707.5H184z" fill="#fcc31e" stroke="none" stroke-width="0"/>
<circle cx="184" cy="711.5" r="3.7" fill="#fff"/><circle cx="184" cy="711.5" r="2.9" fill="#3f7fe8"/>
<path d="M182 722.5h4" fill="none" stroke="#8a8a8a" stroke-width="1.6" stroke-linecap="round"/>
<circle cx="211" cy="707" r="2.6" fill="#5b5fc7"/><circle cx="217.5" cy="708" r="2" fill="#7b83eb"/>
<rect x="213" y="710.5" width="8" height="7.5" rx="2" fill="#7b83eb"/>
<rect x="206.5" y="710" width="9.5" height="9" rx="1.5" fill="#4b53bc"/>
<text x="209.3" y="717.3" font-size="6.5" fill="#fff" stroke="#fff" stroke-width="0.25" font-weight="bold">T</text>
<circle cx="220.2" cy="704.8" r="4.3" fill="#2e9a46" stroke="#eef0f3" stroke-width="0.8"/>
<path d="M218.2 704.9l1.5 1.5l2.6-2.7" fill="none" stroke="#fff" stroke-width="0.9"/>
<path d="M211 722.5h4" fill="none" stroke="#8a8a8a" stroke-width="1.6" stroke-linecap="round"/>
<rect x="238.5" y="704.5" width="11.5" height="14" rx="1.5" fill="#21a366"/>
<rect x="244" y="704.5" width="6" height="7" rx="0" fill="#33c481"/>
<rect x="244" y="711.5" width="6" height="7" rx="0" fill="#107c41"/>
<rect x="235.5" y="708" width="8.5" height="8.5" rx="1" fill="#0f6e39"/>
<text x="237.6" y="714.8" font-size="6.3" fill="#fff" stroke="#fff" stroke-width="0.25" font-weight="bold">X</text>
<path d="M240.5 722.5h4" fill="none" stroke="#8a8a8a" stroke-width="1.6" stroke-linecap="round"/>
<rect x="260.5" y="699.5" width="24" height="26" rx="3" fill="#fafbfc"/>
<circle cx="274" cy="711" r="7.5" fill="#e8553a"/>
<path d="M274 711V703.5A7.5 7.5 0 0 1 281.5 711z" fill="#f59a7e" stroke="none" stroke-width="0"/>
<path d="M274 711h7.5A7.5 7.5 0 0 1 274 718.5z" fill="#c9321c" stroke="none" stroke-width="0"/>
<rect x="264.5" y="707.3" width="8.5" height="8.5" rx="1" fill="#b8301a"/>
<text x="266.8" y="714" font-size="6.3" fill="#fff" stroke="#fff" stroke-width="0.25" font-weight="bold">P</text>
<path d="M268.5 722.5h8" fill="none" stroke="#2f6fd0" stroke-width="2" stroke-linecap="round"/>
<rect x="296.5" y="704.5" width="12" height="14" rx="1.5" fill="#41a5ee"/>
<rect x="296.5" y="709" width="12" height="4.8" rx="0" fill="#2b7cd3"/>
<rect x="296.5" y="713.5" width="12" height="5" rx="1" fill="#185abd"/>
<rect x="293.5" y="708" width="8.5" height="8.5" rx="1" fill="#124ba8"/>
<text x="294.8" y="714.8" font-size="6" fill="#fff" stroke="#fff" stroke-width="0.25" font-weight="bold">W</text>
<path d="M299.5 722.5h4" fill="none" stroke="#8a8a8a" stroke-width="1.6" stroke-linecap="round"/>
<path d="M1065.5 713l3-3l3 3" fill="none" stroke="#222" stroke-width="1.1"/>
<path d="M1085.5 715q-2.5 0-2.5-2.3q0-2.2 2.4-2.3q1-2.4 3.6-2.1q2.3 0.3 2.8 2.5q3 0 3 2.2q0 2-2.2 2z" fill="#1f7fe0" stroke="none" stroke-width="0"/>
<path d="M1089 708.3q2.4 0.3 2.8 2.5q3 0 3 2.2q0 2-2.2 2h-3z" fill="#3fa0f5" stroke="none" stroke-width="0"/>
<rect x="1107" y="706.5" width="8" height="7" rx="0" fill="none" stroke="#222" stroke-width="1"/>
<path d="M1109 716h4M1111 713.5v2.5" fill="none" stroke="#222" stroke-width="0.9"/>
<rect x="1113" y="704.5" width="3.5" height="4" rx="0" fill="#eef0f3" stroke="#222" stroke-width="0.8"/>
<path d="M1122.5 709.5h2l2.5-2.3v8.6l-2.5-2.3h-2z" fill="none" stroke="#222" stroke-width="0.9"/>
<path d="M1129 709q1.3 2 0 4.5M1131 707.5q2.3 3.5 0 7.5" fill="none" stroke="#222" stroke-width="0.8"/>
<text x="1168" y="708.8" font-size="8.6" fill="#1b1b1b" stroke="#1b1b1b" stroke-width="0.25" textLength="18.0" lengthAdjust="spacingAndGlyphs">10:41</text>
<text x="1146" y="720" font-size="8.6" fill="#1b1b1b" stroke="#1b1b1b" stroke-width="0.25" textLength="40.0" lengthAdjust="spacingAndGlyphs">21/03/2026</text>
<path d="M1192.5 714.5q1.6-1.2 1.6-4.5q0.3-3.5 4-3.8q3.6 0.3 4 3.8q0 3.3 1.6 4.5z" fill="#222" stroke="none" stroke-width="0"/>
<path d="M1196.3 716q1.7 1.6 3.4 0" fill="none" stroke="#222" stroke-width="1"/>
<circle cx="1199.5" cy="710" r="2.6" fill="#f0f0f0"/>
<text x="1198.3" y="711.8" font-size="5" fill="#222" stroke="#222" stroke-width="0.25" font-weight="bold">6</text>
</svg>
</body></html>
